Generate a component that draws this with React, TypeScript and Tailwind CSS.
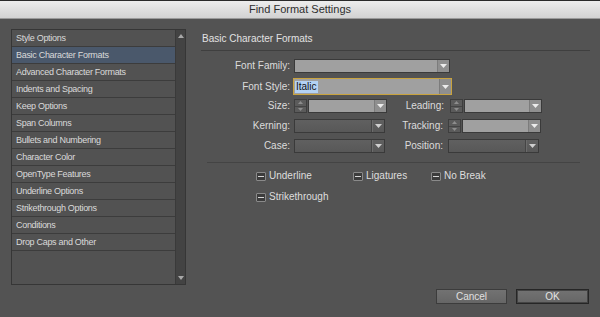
import React from "react";

const items = [
  "Style Options",
  "Basic Character Formats",
  "Advanced Character Formats",
  "Indents and Spacing",
  "Keep Options",
  "Span Columns",
  "Bullets and Numbering",
  "Character Color",
  "OpenType Features",
  "Underline Options",
  "Strikethrough Options",
  "Conditions",
  "Drop Caps and Other",
];

const Arrow = ({ color = "#ececec" }: { color?: string }) => (
  <svg width="7" height="4" viewBox="0 0 7 4">
    <path d="M0 0h7L3.5 4z" fill={color} />
  </svg>
);

const Spinner = ({ className = "" }: { className?: string }) => (
  <div className={`flex h-[14px] w-[13px] flex-col border border-[#3e3e3e] bg-[#5b5b5b] ${className}`}>
    <div className="flex flex-1 items-center justify-center border-b border-[#444]">
      <svg width="5" height="3" viewBox="0 0 5 3">
        <path d="M0 3h5L2.5 0z" fill="#8d8d8d" />
      </svg>
    </div>
    <div className="flex flex-1 items-center justify-center">
      <svg width="5" height="3" viewBox="0 0 5 3">
        <path d="M0 0h5L2.5 3z" fill="#8d8d8d" />
      </svg>
    </div>
  </div>
);

const Field = ({ className = "" }: { className?: string }) => (
  <div className={`flex h-[14px] border border-[#3a3a3a] bg-[#a0a0a0] ${className}`}>
    <div className="flex-1" />
    <div className="flex w-[12px] items-center justify-center border-l border-[#7c7c7c] bg-[#8f8f8f]">
      <Arrow />
    </div>
  </div>
);

const Disabled = ({ className = "" }: { className?: string }) => (
  <div className={`flex h-[14px] border border-[#3a3a3a] bg-gradient-to-b from-[#606060] to-[#585858] ${className}`}>
    <div className="flex-1 border-r border-[#454545]" />
    <div className="flex w-[12px] items-center justify-center border-l border-[#6c6c6c]">
      <Arrow color="#cfcfcf" />
    </div>
  </div>
);

const Check = ({ label }: { label: string }) => (
  <div className="flex items-center">
    <div className="flex h-[9px] w-[10px] items-center justify-center rounded-[1px] border border-[#8a8a8a] bg-[#3c3c3c]">
      <div className="h-px w-[6px] bg-[#d6d6d6]" />
    </div>
    <span className="ml-[3px] text-[10px] leading-none text-[#dedede]">{label}</span>
  </div>
);

const Label = ({ text, className }: { text: string; className: string }) => (
  <span className={`text-right text-[10px] leading-none text-[#dcdcdc] ${className}`}>{text}</span>
);

export default function App() {
  return (
    <div
      className="flex h-[317px] w-[600px] flex-col overflow-hidden bg-[#535353]"
      style={{ fontFamily: '"Liberation Sans", Arial, sans-serif' }}
    >
      <div className="flex h-[19px] items-center justify-center border-t border-[#2a2a2a] border-b border-b-[#9a9a9a] bg-gradient-to-b from-[#ededed] to-[#d2d2d2]">
        <span className="text-[11px] text-[#2e2e2e]">Find Format Settings</span>
      </div>

      <div className="flex flex-1 pl-[11px] pt-[10px] pb-[13px]">
        <div className="flex h-[256px] w-[175px] border border-[#363636] bg-[#525252]">
          <div className="flex flex-1 flex-col">
            {items.map((t, i) => (
              <div
                key={t}
                className={`flex h-[17px] items-center border-b border-[#3c3c3c] pl-[4px] text-[9px] leading-none tracking-[-0.3px] text-[#dadada] ${
                  i === 1 ? "bg-[#4a586b]" : ""
                }`}
              >
                {t}
              </div>
            ))}
          </div>
          <div className="flex w-[10px] flex-col items-center justify-between border-l border-[#3a3a3a] bg-[#434343] py-[4px]">
            <svg width="6" height="4" viewBox="0 0 6 4">
              <path d="M0 4h6L3 0z" fill="#a8a8a8" />
            </svg>
            <svg width="6" height="4" viewBox="0 0 6 4">
              <path d="M0 0h6L3 4z" fill="#a8a8a8" />
            </svg>
          </div>
        </div>

        <div className="ml-[15px] flex w-[389px] flex-col">
          <div className="flex h-[22px] items-center border-b border-[#3f3f3f] pl-[1px] pb-[1px]">
            <span className="text-[10px] leading-none text-[#e2e2e2]">Basic Character Formats</span>
          </div>

          <div className="mt-[8px] flex items-center">
            <Label text="Font Family:" className="w-[89px]" />
            <Field className="ml-[4px] w-[156px]" />
          </div>

          <div className="mt-[5px] flex items-center">
            <Label text="Font Style:" className="w-[89px]" />
            <div className="ml-[3px] flex h-[17px] w-[159px] border border-[#c9a33e] bg-[#a0a0a0]">
              <div className="flex flex-1 items-center pl-[1px]">
                <span className="bg-[#b4d2f4] px-[1px] text-[10px] leading-[12px] text-[#111]">Italic</span>
              </div>
              <div className="flex w-[12px] items-center justify-center border-l border-[#7c7c7c] bg-[#8f8f8f]">
                <Arrow />
              </div>
            </div>
          </div>

          <div className="mt-[4px] flex items-center">
            <Label text="Size:" className="w-[89px]" />
            <Spinner className="ml-[4px]" />
            <Field className="ml-px w-[79px]" />
            <Label text="Leading:" className="w-[57px]" />
            <Spinner className="ml-[6px]" />
            <Field className="ml-px w-[78px]" />
          </div>

          <div className="mt-[6px] flex items-center">
            <Label text="Kerning:" className="w-[89px]" />
            <Disabled className="ml-[4px] w-[91px]" />
            <Label text="Tracking:" className="w-[58px]" />
            <Spinner className="ml-[5px]" />
            <Field className="ml-px w-[79px]" />
          </div>

          <div className="mt-[6px] flex items-center">
            <Label text="Case:" className="w-[89px]" />
            <Disabled className="ml-[4px] w-[91px]" />
            <Label text="Position:" className="w-[58px]" />
            <Disabled className="ml-[5px] w-[91px]" />
          </div>

          <div className="ml-[6px] mt-[9px] h-px w-[373px] bg-[#444]" />

          <div className="mt-[8px] flex pl-[55px]">
            <div className="w-[97px]">
              <Check label="Underline" />
            </div>
            <div className="w-[78px]">
              <Check label="Ligatures" />
            </div>
            <Check label="No Break" />
          </div>
          <div className="mt-[11px] pl-[55px]">
            <Check label="Strikethrough" />
          </div>

          <div className="mt-auto flex justify-end gap-[9px] pr-px">
            <button className="flex h-[15px] w-[71px] items-center justify-center border border-[#3c3c3c] bg-gradient-to-b from-[#727272] to-[#666] text-[10px] leading-none text-[#e0e0e0]">
              Cancel
            </button>
            <button className="flex h-[15px] w-[73px] items-center justify-center border border-[#262626] bg-gradient-to-b from-[#727272] to-[#666] text-[10px] leading-none text-[#e4e4e4] shadow-[inset_0_0_0_1px_#444]">
              OK
            </button>
          </div>
        </div>
      </div>
    </div>
  );
}
